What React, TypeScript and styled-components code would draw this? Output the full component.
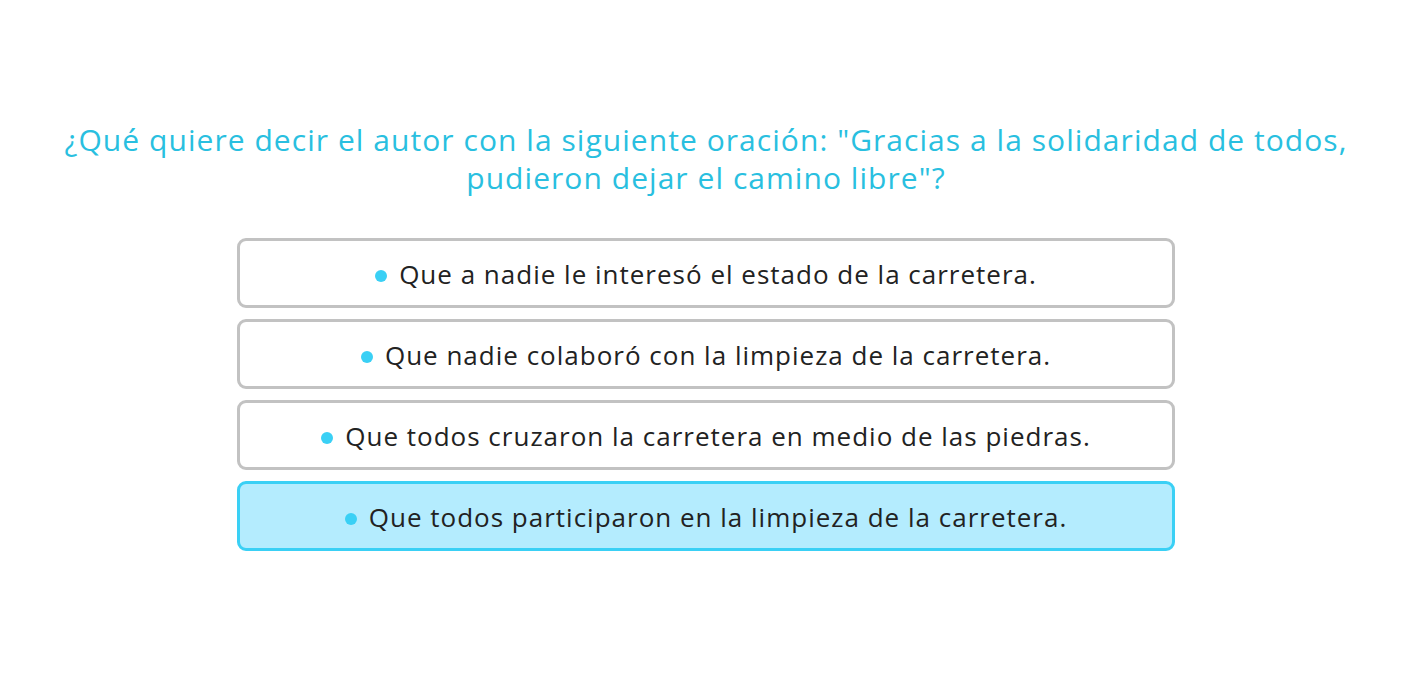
import styled, { createGlobalStyle } from 'styled-components'

const GlobalStyle = createGlobalStyle`
  html, body {
    margin: 0;
    padding: 0;
    background: #ffffff;
  }
  body {
    font-family: 'Open Sans', 'Noto Sans', sans-serif;
  }
`

const Page = styled.div`
  display: flex;
  flex-direction: column;
  align-items: center;
  padding: 121px 8px 0 0;
`

const Question = styled.h1`
  margin: 0 0 41px;
  padding: 0 20px;
  text-align: center;
  color: #29bfe0;
  font-size: 30px;
  font-weight: 400;
  line-height: 38px;
  letter-spacing: 1.05px;
`

const Options = styled.div`
  display: flex;
  flex-direction: column;
  gap: 11px;
  width: 938px;
`

const Option = styled.div<{ selected?: boolean }>`
  display: flex;
  justify-content: center;
  align-items: center;
  gap: 12px;
  height: 70px;
  padding-top: 2px;
  box-sizing: border-box;
  border: 3px solid ${(p) => (p.selected ? '#3ad0f5' : '#c2c2c2')};
  border-radius: 9px;
  background: ${(p) => (p.selected ? '#b4ecfe' : '#ffffff')};
  color: #222222;
  font-size: 26px;
  letter-spacing: 1px;
  cursor: pointer;
`

const Dot = styled.span`
  width: 12px;
  height: 12px;
  margin-top: 3px;
  border-radius: 50%;
  background: #3ad0f5;
  flex-shrink: 0;
`

const answers = [
  'Que a nadie le interesó el estado de la carretera.',
  'Que nadie colaboró con la limpieza de la carretera.',
  'Que todos cruzaron la carretera en medio de las piedras.',
  'Que todos participaron en la limpieza de la carretera.',
]

export default function App() {
  return (
    <>
      <GlobalStyle />
      <Page>
        <Question>
          ¿Qué quiere decir el autor con la siguiente oración: "Gracias a la solidaridad de todos,
          <br />
          pudieron dejar el camino libre"?
        </Question>
        <Options>
          {answers.map((a, i) => (
            <Option key={i} selected={i === 3}>
              <Dot />
              {a}
            </Option>
          ))}
        </Options>
      </Page>
    </>
  )
}
